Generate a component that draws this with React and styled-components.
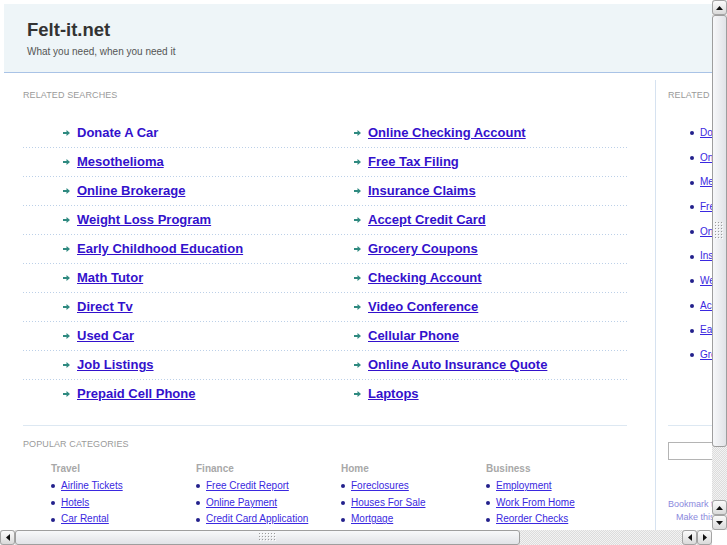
import styled, { createGlobalStyle } from "styled-components";

const GlobalStyle = createGlobalStyle`
  html, body {
    margin: 0;
    padding: 0;
    overflow: hidden;
    background: #fff;
  }
  body {
    font-family: "Liberation Sans", Arial, sans-serif;
  }
`;

const Frame = styled.div`
  width: 727px;
  height: 545px;
  display: grid;
  grid-template-columns: 1fr 15px;
  grid-template-rows: 1fr 15px;
  background: #fff;
`;

const Viewport = styled.div`
  overflow: hidden;
  min-width: 0;
  min-height: 0;
`;

const ScrollBar = styled.div`
  display: flex;
  flex-direction: ${(p) => (p.$vertical ? "column" : "row")};
  background: repeating-conic-gradient(#dcdcdc 0 25%, #f3f3f3 0 50%) 0 0 / 2px 2px;
`;

const ScrollButton = styled.div`
  flex: 0 0 15px;
  width: 15px;
  height: 15px;
  box-sizing: border-box;
  border: 1px solid #a4a4a4;
  border-radius: 3px;
  background: linear-gradient(#fbfbfb, #dadada);
  display: flex;
  align-items: center;
  justify-content: center;
`;

const Thumb = styled.div`
  flex: 0 0 ${(p) => p.$size}px;
  box-sizing: border-box;
  border: 1px solid #9e9e9e;
  border-radius: 3px;
  background: linear-gradient(
    ${(p) => (p.$vertical ? "to right" : "to bottom")},
    #f7f8fa,
    #e1e3e7
  );
  display: flex;
  align-items: center;
  justify-content: center;
`;

const Track = styled.div`
  flex: 1;
`;

const Corner = styled.div`
  background: #fff;
`;

const Page = styled.div`
  width: 942px;
  min-height: 595px;
  box-sizing: border-box;
  padding: 4px 4px 0;
  display: flex;
  flex-direction: column;
`;

const Header = styled.header`
  background: #eef5f8;
  border-bottom: 1px solid #a9c3e6;
  padding: 15px 23px 14px;
`;

const SiteTitle = styled.h1`
  margin: 0;
  font-size: 18.5px;
  line-height: 22px;
  font-weight: 700;
  color: #333;
`;

const Tagline = styled.p`
  margin: 4px 0 0;
  font-size: 10px;
  line-height: 13px;
  color: #555;
`;

const Main = styled.div`
  flex: 1;
  display: flex;
  margin-top: 7px;
`;

const Content = styled.section`
  width: 651px;
  flex-shrink: 0;
  box-sizing: border-box;
  padding: 9px 28px 0 19px;
`;

const Sidebar = styled.aside`
  flex: 1;
  border-left: 1px solid #d6e2f0;
  padding: 9px 0 0 12px;
`;

const SectionLabel = styled.h2`
  margin: 0;
  font-size: 9px;
  line-height: 12px;
  font-weight: 400;
  text-transform: uppercase;
  color: #9a9a9a;
  letter-spacing: 0.1px;
  white-space: nowrap;
`;

const SearchList = styled.div`
  margin-top: 18px;
`;

const SearchRow = styled.div`
  display: grid;
  grid-template-columns: 291px 1fr;
  padding: 6px 0 ${(p) => (p.$last ? "6px" : "7px")} 40px;
  background: ${(p) =>
    p.$last
      ? "none"
      : "linear-gradient(to right, #bcd0e8 1px, transparent 1px) left bottom / 3px 1px repeat-x"};
`;

const SearchItem = styled.div`
  display: flex;
  align-items: center;
  gap: 7px;
`;

const SearchLink = styled.a`
  font-size: 13px;
  line-height: 16px;
  font-weight: 700;
  color: #3311cc;
  text-decoration: ${(p) => (p.$plain ? "none" : "underline")};
  white-space: nowrap;
  cursor: pointer;
`;

const Categories = styled.div`
  margin-top: 17px;
  border-top: 1px solid #dde8f2;
  padding-top: 12px;
`;

const CategoryGrid = styled.div`
  display: grid;
  grid-template-columns: repeat(4, 145px);
  padding-left: 28px;
  margin-top: 12px;
`;

const CategoryTitle = styled.h3`
  margin: 0;
  font-size: 10px;
  line-height: 13px;
  font-weight: 700;
  color: #a8a8a8;
`;

const BulletList = styled.ul`
  list-style: none;
  margin: ${(p) => p.$top || "0"} 0 0;
  padding: 0 0 0 ${(p) => p.$indent || "0"};
`;

const BulletItem = styled.li`
  display: flex;
  align-items: center;
  gap: 6px;
  font-size: 10px;
  line-height: 16.67px;
  padding: ${(p) => p.$pad || "0"} 0;
  white-space: nowrap;

  &::before {
    content: "";
    width: 4px;
    height: 4px;
    border-radius: 50%;
    background: #23208c;
    flex-shrink: 0;
  }
`;

const SmallLink = styled.a`
  color: #3a28e0;
  text-decoration: underline;
  cursor: pointer;
`;

const Divider = styled.hr`
  border: 0;
  border-top: 1px solid #dde8f2;
  margin: 57px 0 0;
`;

const SearchBox = styled.input`
  display: block;
  margin-top: 16px;
  width: 200px;
  height: 18px;
  box-sizing: border-box;
  border: 1px solid #b4b4b4;
  padding: 0 3px;
  font-family: inherit;
  font-size: 10px;
`;

const Utility = styled.div`
  margin-top: 38px;
  font-size: 9px;
  line-height: 13px;
  color: #8b89dd;
  white-space: nowrap;
`;

const UtilityLine = styled.div`
  padding-left: ${(p) => p.$indent || "0"};
`;

function ArrowIcon() {
  return (
    <svg width="7" height="6" viewBox="0 0 7 6" aria-hidden="true">
      <path d="M0 2h3.5V0L7 3 3.5 6V4H0z" fill="#2f8a80" />
    </svg>
  );
}

const triangles = {
  up: "M0 4L3.5 0L7 4z",
  down: "M0 0L3.5 4L7 0z",
  left: "M4 0L0 3.5L4 7z",
  right: "M0 0L4 3.5L0 7z",
};

function Triangle({ dir }) {
  const flat = dir === "up" || dir === "down";
  const w = flat ? 7 : 4;
  const h = flat ? 4 : 7;
  return (
    <svg width={w} height={h} viewBox={`0 0 ${w} ${h}`} aria-hidden="true">
      <path d={triangles[dir]} fill="#111" />
    </svg>
  );
}

function Grip({ cols, rows }) {
  const dots = [];
  for (let c = 0; c < cols; c++) {
    for (let r = 0; r < rows; r++) {
      dots.push(
        <g key={`${c}-${r}`}>
          <rect x={c * 3} y={r * 3} width="1" height="1" fill="#9a9a9a" />
          <rect x={c * 3 + 1} y={r * 3 + 1} width="1" height="1" fill="#fff" />
        </g>
      );
    }
  }
  return (
    <svg width={cols * 3} height={rows * 3} aria-hidden="true">
      {dots}
    </svg>
  );
}

const left = [
  "Donate A Car",
  "Mesothelioma",
  "Online Brokerage",
  "Weight Loss Program",
  "Early Childhood Education",
  "Math Tutor",
  "Direct Tv",
  "Used Car",
  "Job Listings",
  "Prepaid Cell Phone",
];

const right = [
  "Online Checking Account",
  "Free Tax Filing",
  "Insurance Claims",
  "Accept Credit Card",
  "Grocery Coupons",
  "Checking Account",
  "Video Conference",
  "Cellular Phone",
  "Online Auto Insurance Quote",
  "Laptops",
];

const categories = [
  { title: "Travel", items: ["Airline Tickets", "Hotels", "Car Rental"] },
  { title: "Finance", items: ["Free Credit Report", "Online Payment", "Credit Card Application"] },
  { title: "Home", items: ["Foreclosures", "Houses For Sale", "Mortgage"] },
  { title: "Business", items: ["Employment", "Work From Home", "Reorder Checks"] },
];

const sideLinks = left.slice(0, 5).flatMap((name, i) => [name, right[i]]);

export default function App() {
  return (
    <>
      <GlobalStyle />
      <Frame>
        <Viewport>
          <Page>
            <Header>
              <SiteTitle>Felt-it.net</SiteTitle>
              <Tagline>What you need, when you need it</Tagline>
            </Header>
            <Main>
              <Content>
                <SectionLabel>Related Searches</SectionLabel>
                <SearchList>
                  {left.map((name, i) => (
                    <SearchRow key={name} $last={i === left.length - 1}>
                      <SearchItem>
                        <ArrowIcon />
                        <SearchLink $plain={i === 0}>{name}</SearchLink>
                      </SearchItem>
                      <SearchItem>
                        <ArrowIcon />
                        <SearchLink>{right[i]}</SearchLink>
                      </SearchItem>
                    </SearchRow>
                  ))}
                </SearchList>
                <Categories>
                  <SectionLabel>Popular Categories</SectionLabel>
                  <CategoryGrid>
                    {categories.map((cat) => (
                      <div key={cat.title}>
                        <CategoryTitle>{cat.title}</CategoryTitle>
                        <BulletList $top="3px">
                          {cat.items.map((item) => (
                            <BulletItem key={item}>
                              <SmallLink>{item}</SmallLink>
                            </BulletItem>
                          ))}
                        </BulletList>
                      </div>
                    ))}
                  </CategoryGrid>
                </Categories>
              </Content>
              <Sidebar>
                <SectionLabel>Related Searches</SectionLabel>
                <BulletList $top="20px" $indent="22px">
                  {sideLinks.map((name) => (
                    <BulletItem key={name} $pad="4px">
                      <SmallLink>{name}</SmallLink>
                    </BulletItem>
                  ))}
                </BulletList>
                <Divider />
                <SearchBox type="text" aria-label="Search" />
                <Utility>
                  <UtilityLine>Bookmark this page</UtilityLine>
                  <UtilityLine $indent="8px">Make this your homepage</UtilityLine>
                </Utility>
              </Sidebar>
            </Main>
          </Page>
        </Viewport>

        <ScrollBar $vertical>
          <ScrollButton>
            <Triangle dir="up" />
          </ScrollButton>
          <Thumb $vertical $size={432}>
            <Grip cols={3} rows={6} />
          </Thumb>
          <Track />
          <ScrollButton>
            <Triangle dir="up" />
          </ScrollButton>
          <ScrollButton>
            <Triangle dir="down" />
          </ScrollButton>
        </ScrollBar>

        <ScrollBar>
          <ScrollButton>
            <Triangle dir="left" />
          </ScrollButton>
          <Thumb $size={505}>
            <Grip cols={6} rows={3} />
          </Thumb>
          <Track />
          <ScrollButton>
            <Triangle dir="left" />
          </ScrollButton>
          <ScrollButton>
            <Triangle dir="right" />
          </ScrollButton>
        </ScrollBar>

        <Corner />
      </Frame>
    </>
  );
}
